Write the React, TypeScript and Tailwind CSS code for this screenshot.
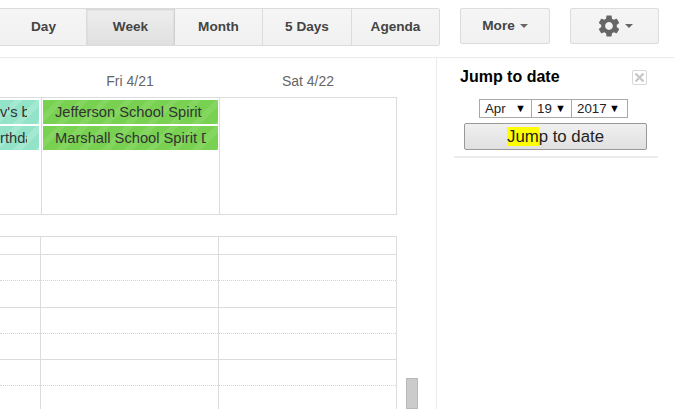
import React from "react";

const segs = ["Day", "Week", "Month", "5 Days", "Agenda"];
const btnBase = "h-[36px] flex items-center justify-center text-[13.6px] font-bold text-[#444] bg-gradient-to-b from-[#f5f5f5] to-[#f1f1f1]";

function Caret({ className }: { className: string }) {
  return <span className={"w-0 h-0 border-x-[4px] border-x-transparent border-t-[4px] " + className} />;
}

function Gear() {
  return (
    <svg width="26" height="26" viewBox="0 0 24 24" className="text-[#666]">
      <path
        fill="currentColor"
        d="M19.14 12.94c.04-.3.06-.61.06-.94 0-.32-.02-.64-.07-.94l2.03-1.58c.18-.14.23-.41.12-.61l-1.92-3.32c-.12-.22-.37-.29-.59-.22l-2.39.96c-.5-.38-1.03-.7-1.62-.94l-.36-2.54c-.04-.24-.24-.41-.48-.41h-3.84c-.24 0-.43.17-.47.41l-.36 2.54c-.59.24-1.13.57-1.62.94l-2.39-.96c-.22-.08-.47 0-.59.22L2.74 8.87c-.12.21-.08.47.12.61l2.03 1.58c-.05.3-.09.63-.09.94s.02.64.07.94l-2.03 1.58c-.18.14-.23.41-.12.61l1.92 3.32c.12.22.37.29.59.22l2.39-.96c.5.38 1.03.7 1.62.94l.36 2.54c.05.24.24.41.48.41h3.84c.24 0 .44-.17.47-.41l.36-2.54c.59-.24 1.13-.56 1.62-.94l2.39.96c.22.08.47 0 .59-.22l1.92-3.32c.12-.22.07-.47-.12-.61l-2.01-1.58zM12 15.6c-1.98 0-3.6-1.62-3.6-3.6s1.62-3.6 3.6-3.6 3.6 1.62 3.6 3.6-1.62 3.6-3.6 3.6z"
      />
    </svg>
  );
}

function Event({ text, color, flush }: { text: string; color: "green" | "teal"; flush?: boolean }) {
  const bg =
    color === "green"
      ? "bg-[repeating-linear-gradient(135deg,#79d151_0px,#79d151_10px,#84d660_10px,#84d660_16px)]"
      : "bg-[repeating-linear-gradient(135deg,#92e3c8_0px,#92e3c8_10px,#a3e8d1_10px,#a3e8d1_16px)]";
  return (
    <div className={"h-[24px] overflow-hidden flex items-center text-[14.7px] text-[#333] whitespace-nowrap " + bg + (flush ? " pr-[12px]" : " pl-[12px] pr-[12px]")}>
      <span className="overflow-hidden block">{text}</span>
    </div>
  );
}

function HourRow({ h, dotted, last }: { h: number; dotted?: number; last?: boolean }) {
  return (
    <div className={"grid grid-cols-[41px_178px_178px] " + (last ? "" : "border-b border-[#dcdcdc]")} style={{ height: h }}>
      {[0, 1, 2].map((i) => (
        <div key={i} className="border-r border-[#dcdcdc]">
          {dotted ? <div className="border-b border-dotted border-[#d4d4d4]" style={{ height: dotted }} /> : null}
        </div>
      ))}
    </div>
  );
}

function Pick({ label, width, gap, pad }: { label: string; width: string; gap?: boolean; pad: string }) {
  return (
    <div className={width + (gap ? " ml-[-1px]" : "") + " " + pad + " border border-[#a9a9a9] flex items-center justify-between pl-[5px]"}>
      <span>{label}</span>
      <span className="text-[11px] text-black">▼</span>
    </div>
  );
}

export default function App() {
  return (
    <div className="w-[674px] h-[409px] overflow-hidden bg-white font-['Liberation_Sans',Arial,sans-serif]">
      <div className="h-[58px] border-b border-[#ebebeb] flex items-start pt-[8px]">
        <div className="flex ml-[-2px] w-[442px] border border-[#dcdcdc] rounded-r-[2px] box-border">
          {segs.map((s, i) => (
            <div
              key={s}
              className={
                btnBase +
                " " +
                (i === 0
                  ? "w-[88px] border-r border-[#dcdcdc] pl-[2px]"
                  : i === 1
                    ? "w-[88px] border-r border-[#cfcfcf] !from-[#eeeeee] !to-[#e0e0e0] text-[#333] shadow-[inset_0_1px_2px_rgba(0,0,0,0.12)]"
                    : i === 4
                      ? "flex-1"
                      : i === 3
                        ? "w-[89px] border-r border-[#dcdcdc]"
                        : "w-[88px] border-r border-[#dcdcdc]")
              }
            >
              {s}
            </div>
          ))}
        </div>
        <div className={"ml-[20px] w-[88px] gap-[5px] border border-[#dcdcdc] rounded-[2px] box-content !h-[34px] " + btnBase}>
          More <Caret className="border-t-[#666]" />
        </div>
        <div className={"ml-[20px] w-[87px] gap-[3px] border border-[#dcdcdc] rounded-[2px] box-content !h-[34px] " + btnBase}>
          <Gear />
          <Caret className="border-t-[#666]" />
        </div>
      </div>

      <div className="flex h-[351px]">
        <div className="w-[437px] border-r border-[#ebebeb] shrink-0 overflow-hidden flex">
          <div className="w-[397px] shrink-0">
            <div className="grid grid-cols-[41px_178px_178px] h-[39px] items-end pb-[5px] text-[14px] text-[#666] text-center">
              <div />
              <div>Fri 4/21</div>
              <div>Sat 4/22</div>
            </div>
            <div className="h-[118px] border-y border-r border-[#dcdcdc] grid grid-cols-[42px_178px_1fr]">
              <div className="border-r border-[#dcdcdc] pt-[2px] pr-[2px] flex flex-col gap-[2px]">
                <Event text="v's bi" color="teal" flush />
                <Event text="rthda" color="teal" flush />
              </div>
              <div className="border-r border-[#dcdcdc] pt-[2px] px-[1px] flex flex-col gap-[2px]">
                <Event text="Jefferson School Spirit" color="green" />
                <Event text="Marshall School Spirit D" color="green" />
              </div>
              <div />
            </div>
            <div className="h-[21px]" />
            <div className="border-t border-[#dcdcdc]">
              <HourRow h={18} />
              <HourRow h={53} dotted={26} />
              <HourRow h={52} dotted={26} />
              <HourRow h={60} dotted={26} last />
            </div>
          </div>
          <div className="ml-[9px] w-[12px] h-[31px] mt-[320px] bg-[#cbcbcb] border border-[#b8b8b8]" />
        </div>

        <div className="w-[237px] pl-[17px] pr-[16px]">
          <div className="flex items-center justify-between pl-[6px] pt-[10px] pr-[11px]">
            <span className="text-[16px] leading-[18px] font-bold text-black">Jump to date</span>
            <span className="w-[15px] h-[15px] border border-[#d8d8d8] rounded-[2px] flex items-center justify-center">
              <svg width="11" height="11" viewBox="0 0 11 11">
                <path d="M1.5 1.5l8 8M9.5 1.5l-8 8" stroke="#c8c8c8" strokeWidth="2.4" />
              </svg>
            </span>
          </div>
          <div className="flex mt-[13px] ml-[25px] text-[13.3px] text-[#222] h-[19px]">
            <Pick label="Apr" width="w-[53px]" pad="pr-[5px]" />
            <Pick label="19" width="w-[41px]" pad="pr-[5px]" gap />
            <Pick label="2017" width="w-[57px]" pad="pr-[7px]" gap />
          </div>
          <div className="ml-[10px] mt-[5px] w-[183px] h-[27px] border border-[#999] rounded-[2px] bg-gradient-to-b from-[#f0f0f0] to-[#e0e0e0] flex items-center justify-center text-[16.8px] text-[#222]">
            <span>
              <span className="bg-[#ffff00]">Jum</span>p to date
            </span>
          </div>
          <div className="mt-[6px] h-[2px] bg-[#ececec]" />
        </div>
      </div>
    </div>
  );
}
